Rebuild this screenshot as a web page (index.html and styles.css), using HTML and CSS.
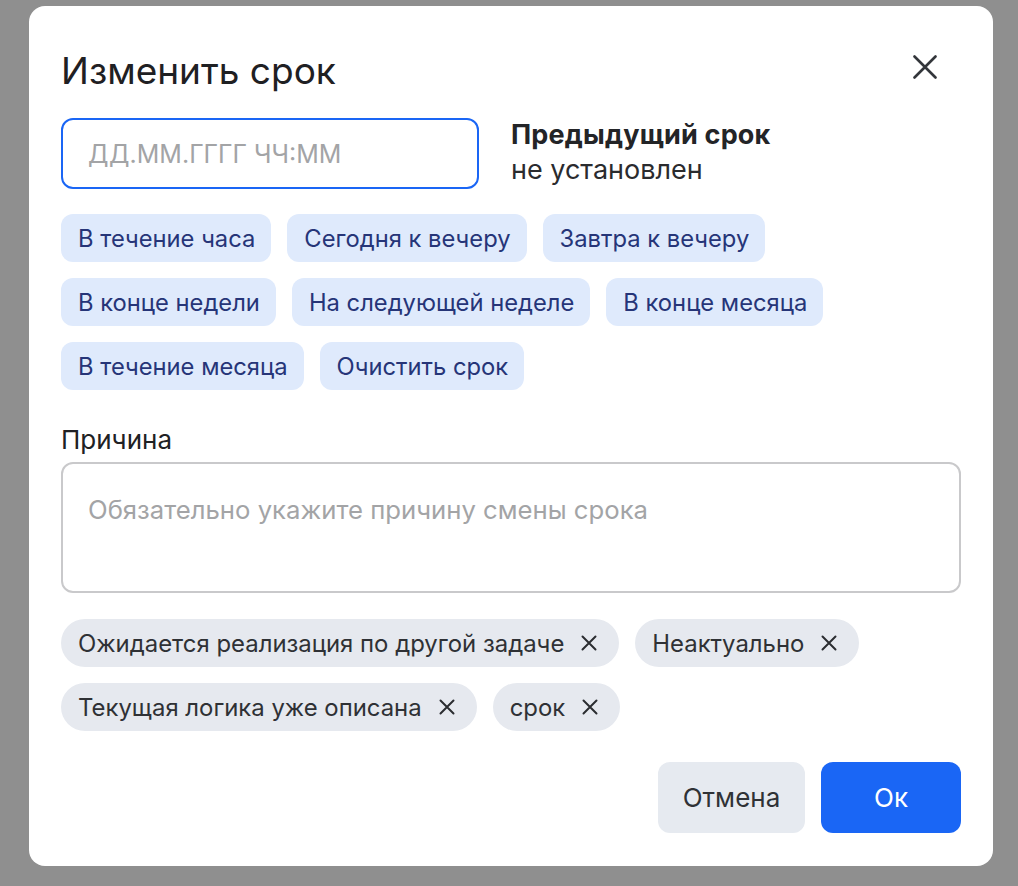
FILE: index.html
```html
<!DOCTYPE html>
<html lang="ru">
<head>
<meta charset="utf-8">
<link rel="stylesheet" href="styles.css">
</head>
<body>
<div class="backdrop">
  <div class="dialog">
    <div class="header">
      <h1 class="title">Изменить срок</h1>
      <button class="close" aria-label="Закрыть">
        <svg width="24" height="24" viewBox="0 0 24 24"><path d="M1.5 1.5L22.5 22.5M22.5 1.5L1.5 22.5" stroke="#33363b" stroke-width="2.6" stroke-linecap="round" fill="none"/></svg>
      </button>
    </div>
    <div class="date-row">
      <div class="date-input"><span class="placeholder">ДД.ММ.ГГГГ ЧЧ:ММ</span></div>
      <div class="prev">
        <div class="prev-title">Предыдущий срок</div>
        <div class="prev-value">не установлен</div>
      </div>
    </div>
    <div class="chips">
      <span class="chip">В течение часа</span>
      <span class="chip">Сегодня к вечеру</span>
      <span class="chip">Завтра к вечеру</span>
      <span class="chip">В конце недели</span>
      <span class="chip">На следующей неделе</span>
      <span class="chip">В конце месяца</span>
      <span class="chip">В течение месяца</span>
      <span class="chip">Очистить срок</span>
    </div>
    <div class="label">Причина</div>
    <div class="textarea"><span class="placeholder">Обязательно укажите причину смены срока</span></div>
    <div class="tags">
      <span class="tag">Ожидается реализация по другой задаче<svg class="x" width="16" height="16" viewBox="0 0 16 16"><path d="M1.5 1.5L14.5 14.5M14.5 1.5L1.5 14.5" stroke="#2b2d31" stroke-width="2" stroke-linecap="round" fill="none"/></svg></span>
      <span class="tag">Неактуально<svg class="x" width="16" height="16" viewBox="0 0 16 16"><path d="M1.5 1.5L14.5 14.5M14.5 1.5L1.5 14.5" stroke="#2b2d31" stroke-width="2" stroke-linecap="round" fill="none"/></svg></span>
      <span class="tag">Текущая логика уже описана<svg class="x" width="16" height="16" viewBox="0 0 16 16"><path d="M1.5 1.5L14.5 14.5M14.5 1.5L1.5 14.5" stroke="#2b2d31" stroke-width="2" stroke-linecap="round" fill="none"/></svg></span>
      <span class="tag">срок<svg class="x" width="16" height="16" viewBox="0 0 16 16"><path d="M1.5 1.5L14.5 14.5M14.5 1.5L1.5 14.5" stroke="#2b2d31" stroke-width="2" stroke-linecap="round" fill="none"/></svg></span>
    </div>
    <div class="actions">
      <button class="btn btn-secondary">Отмена</button>
      <button class="btn btn-primary">Ок</button>
    </div>
  </div>
</div>
</body>
</html>
```
FILE: styles.css
```css
* { box-sizing: border-box; }
html, body { margin: 0; padding: 0; }
body {
  background: #8f8f8f;
  font-family: Inter, "Noto Sans", sans-serif;
  width: 1018px;
  height: 886px;
  overflow: hidden;
}
.backdrop {
  padding: 6px 0 0 29px;
}
.dialog {
  width: 964px;
  height: 860px;
  background: #ffffff;
  border-radius: 16px;
  padding: 0 32px;
  display: flex;
  flex-direction: column;
}
.header {
  display: flex;
  justify-content: space-between;
  align-items: flex-start;
  height: 112px;
}
.title {
  margin: 43px 0 0 0;
  font-size: 37px;
  font-weight: 400;
  color: #1f2023;
  line-height: 44px;
}
.close {
  border: 0;
  background: none;
  padding: 0;
  width: 24px;
  height: 24px;
  margin: 49px 24px 0 0;
  display: flex;
}
.date-row {
  display: flex;
  gap: 32px;
  align-items: flex-start;
}
.date-input {
  width: 418px;
  height: 71px;
  border: 2px solid #1a66f5;
  border-radius: 12px;
  display: flex;
  align-items: center;
  padding-left: 25px;
}
.placeholder {
  color: #a3a4a6;
  font-size: 25px;
  line-height: 30px;
}
.prev-title {
  font-size: 27px;
  font-weight: 700;
  color: #232427;
  line-height: 34px;
  letter-spacing: 0.2px;
}
.prev-value {
  font-size: 27px;
  color: #2a2b2e;
  line-height: 36px;
}
.chips {
  display: flex;
  flex-wrap: wrap;
  gap: 16px;
  margin-top: 25px;
}
.chip {
  height: 48px;
  display: inline-flex;
  align-items: center;
  padding: 0 16px 0 17px;
  background: #dfeafc;
  color: #263578;
  border-radius: 12px;
  font-size: 23.75px;
}
.label {
  margin-top: 35px;
  font-size: 26px;
  color: #202124;
  line-height: 30px;
}
.textarea {
  margin-top: 7px;
  height: 131px;
  border: 2px solid #c9c9cb;
  border-radius: 12px;
  padding: 31px 25px 0;
}
.textarea .placeholder {
  font-size: 25.7px;
}
.tags {
  display: flex;
  flex-wrap: wrap;
  gap: 16px;
  margin-top: 26px;
}
.tag {
  height: 48px;
  display: inline-flex;
  align-items: center;
  gap: 17px;
  padding: 0 22px 0 17px;
  background: #e6e9ef;
  color: #2f3135;
  border-radius: 24px;
  font-size: 23.9px;
}
.x { flex: none; }
.actions {
  display: flex;
  justify-content: flex-end;
  gap: 16px;
  margin-top: 31px;
}
.btn {
  border: 0;
  height: 71px;
  border-radius: 12px;
  font-family: Inter, "Noto Sans", sans-serif;
  font-size: 26px;
  padding: 0;
}
.btn-secondary {
  width: 147px;
  background: #e6eaf0;
  color: #2f3236;
}
.btn-primary {
  width: 140px;
  background: #1a66f5;
  color: #ffffff;
}
```
